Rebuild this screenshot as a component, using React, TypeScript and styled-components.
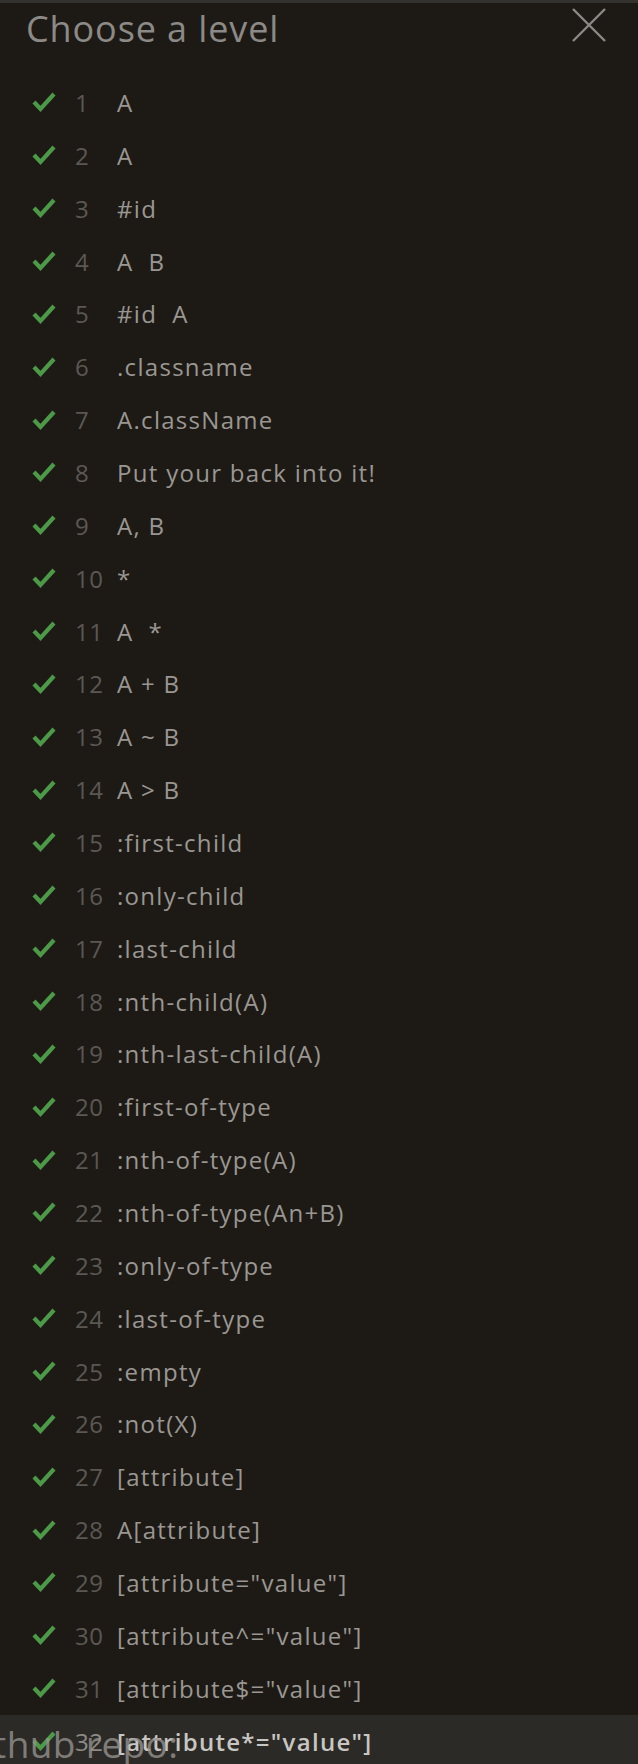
import React from 'react'
import styled, { createGlobalStyle } from 'styled-components'

const levels = [
  'A',
  'A',
  '#id',
  'A  B',
  '#id  A',
  '.classname',
  'A.className',
  'Put your back into it!',
  'A, B',
  '*',
  'A  *',
  'A + B',
  'A ~ B',
  'A > B',
  ':first-child',
  ':only-child',
  ':last-child',
  ':nth-child(A)',
  ':nth-last-child(A)',
  ':first-of-type',
  ':nth-of-type(A)',
  ':nth-of-type(An+B)',
  ':only-of-type',
  ':last-of-type',
  ':empty',
  ':not(X)',
  '[attribute]',
  'A[attribute]',
  '[attribute="value"]',
  '[attribute^="value"]',
  '[attribute$="value"]',
  '[attribute*="value"]',
]

const CURRENT = 32

const Check = () => (
  <svg width="26" height="22" viewBox="0 0 26 22">
    <polyline points="3,11 9.5,18 23,3" fill="none" stroke="#4c9a48" strokeWidth="4.2" strokeLinejoin="miter" />
  </svg>
)

const CloseIcon = () => (
  <svg width="36" height="36" viewBox="0 0 36 36">
    <path d="M2 2 L34 34 M34 2 L2 34" stroke="#8a8884" strokeWidth="2.4" fill="none" />
  </svg>
)

const App = () => (
  <>
    <GlobalStyle />
    <Menu>
      <Header>
        <Title>Choose a level</Title>
        <CloseButton>
          <CloseIcon />
        </CloseButton>
      </Header>
      <Levels>
        {levels.map((name, i) => (
          <Level key={i} current={i + 1 === CURRENT}>
            <CheckMark>
              <Check />
            </CheckMark>
            <Num current={i + 1 === CURRENT}>{i + 1}</Num>
            <Name>{name}</Name>
          </Level>
        ))}
      </Levels>
      <Underlay>Github repo:</Underlay>
    </Menu>
  </>
)

const GlobalStyle = createGlobalStyle`
  html, body {
    margin: 0;
    padding: 0;
    background: #1d1a16;
  }
  body {
    font-family: "Open Sans", "Noto Sans", sans-serif;
  }
`
const Menu = styled.div`
  position: relative;
  width: 638px;
  height: 1764px;
  overflow: hidden;
  background: #1d1a16;
  border-top: 3px solid #34322e;
  box-sizing: border-box;
`
const Header = styled.div`
  display: flex;
  justify-content: space-between;
  align-items: flex-start;
  height: 73px;
  padding: 0 31px 0 26px;
`
const Title = styled.h1`
  margin: 0;
  padding-top: 4px;
  font-size: 36px;
  font-weight: 400;
  line-height: 44px;
  color: #8c8a86;
  letter-spacing: 0.9px;
`
const CloseButton = styled.div`
  padding-top: 4px;
  display: flex;
`
const Levels = styled.div`
  display: flex;
  flex-direction: column;
`
const Level = styled.div<{ current: boolean }>`
  display: flex;
  align-items: center;
  height: 52.87px;
  padding-left: 31px;
  background: ${({ current }) => (current ? '#2c2a26' : 'transparent')};
  font-size: 24px;
  font-weight: ${({ current }) => (current ? 600 : 400)};
  color: ${({ current }) => (current ? '#c8c6c2' : '#9a9792')};
`
const CheckMark = styled.span`
  display: flex;
  width: 44px;
`
const Num = styled.span<{ current: boolean }>`
  min-width: 42px;
  color: ${({ current }) => (current ? '#8d8a85' : '#5b5853')};
  font-weight: 400;
  letter-spacing: 0.5px;
`
const Name = styled.span`
  white-space: pre;
  letter-spacing: 1.3px;
`
// text of the page below the menu, showing through at the bottom edge
const Underlay = styled.div`
  position: absolute;
  left: -44px;
  bottom: -2px;
  font-size: 37px;
  line-height: 44px;
  letter-spacing: 0.4px;
  color: rgba(150, 148, 144, 0.8);
  pointer-events: none;
`

export default App
